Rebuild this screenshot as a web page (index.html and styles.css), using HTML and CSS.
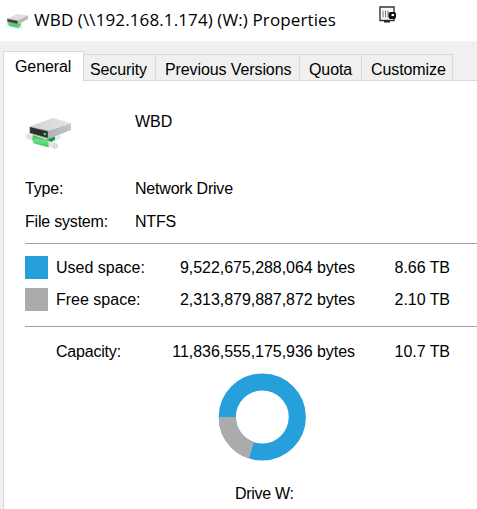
FILE: index.html
```
<!DOCTYPE html>
<html lang="en">
<head>
    <meta charset="UTF-8">
    <meta name="viewport" content="width=device-width, initial-scale=1.0">
    <title>WBD (\\192.168.1.174) (W:) Properties</title>
    <link rel="stylesheet" href="styles.css">
</head>
<body>
    <header class="titlebar">
        <svg class="title-icon" width="24" height="17" viewBox="0 0 24 17">
            <path d="M1 10l3-1 13 4v2l-3 1L2 12z" fill="#e0e3e2"/>
            <path d="M3 9.500l10 1.500 3-1v2l-3 3-9-2z" fill="#4fd06c"/>
            <path d="M2 5.500L12 1l11 1.500L13 7.500z" fill="#dcdddf"/>
            <path d="M13 7.500l10-5v3.500L13 11.500z" fill="#b5b7b9"/>
            <path d="M2 5.500l11 2v4L2 9z" fill="#77797b"/>
            <path d="M3 6.500l9 1.700v2L3 8.500z" fill="#3a3d3d"/>
        </svg>
        <h1 class="title">WBD (\\192.168.1.174) (W:) Properties</h1>
        <svg class="pin-icon" width="18" height="18" viewBox="0 0 18 18">
            <path d="M1 1h14v13.500H1z" fill="#fff" stroke="#333" stroke-width="1.400"/>
            <path d="M4 4.500v7M6.500 4.500v7M9 4.500v7" stroke="#777"/>
            <path d="M5 14.500h6v2H5z" fill="#222"/>
            <rect x="9.500" y="6" width="7.500" height="7" rx="2" fill="#111"/>
            <path d="M12.500 8h2.500v2h-2.500z" fill="#fff"/>
        </svg>
    </header>

    <nav class="tabs">
        <div class="tab active">General</div>
        <div class="tab security">Security</div>
        <div class="tab versions">Previous Versions</div>
        <div class="tab quota">Quota</div>
        <div class="tab customize">Customize</div>
    </nav>

    <main class="panel">
        <div class="info drive">
            <svg class="drive-icon" width="47" height="34" viewBox="0 0 47 34">
                <defs>
                    <linearGradient id="top" x1="0" y1="0" x2="1" y2="0">
                        <stop offset="0" stop-color="#d2d3d6"/>
                        <stop offset="1" stop-color="#e2e3e6"/>
                    </linearGradient>
                    <linearGradient id="side" x1="0" y1="0" x2="1" y2="0">
                        <stop offset="0" stop-color="#b2b3b7"/>
                        <stop offset="1" stop-color="#c4c5c9"/>
                    </linearGradient>
                    <linearGradient id="pipe" x1=".1" y1="0" x2="0" y2="1">
                        <stop offset="0" stop-color="#35b956"/>
                        <stop offset=".45" stop-color="#72dc83"/>
                        <stop offset="1" stop-color="#35bd55"/>
                    </linearGradient>
                </defs>
                <!-- network cable -->
                <path d="M28 20l7-3 1 3-7 4z" fill="#e4e6e7"/>
                <path d="M22 21l8-3v3.500L24 26z" fill="#149c4d"/>
                <path d="M2 15.500l6 2v5L2 21Q-.5 18 2 15.500z" fill="#dfe2e2"/>
                <path d="M8 17l16 5v7.500L9 25.500q-3-3-1-8.500z" fill="url(#pipe)"/>
                <path d="M23.500 23l8 2q2.500 3 0 6l-8-2z" fill="#e6e8e8"/>
                <ellipse cx="30.500" cy="28" rx="1.700" ry="2.600" fill="#e2e4e4" stroke="#c3c5c5" stroke-width=".7"/>
                <!-- disk box -->
                <path d="M4.500 8.500L28 0l18 5.300-22.500 7.400z" fill="url(#top)"/>
                <path d="M23.500 12.700L46 5.300V12l-22.500 9z" fill="url(#side)"/>
                <path d="M4.500 8.500l19 4.200V21l-19-5.500z" fill="#8b8c8f"/>
                <path d="M5.200 9.300l17.500 4.100v6.300L5.200 14.700z" fill="#2b2e2e"/>
                <circle cx="19.800" cy="16" r="1.300" fill="#40e650"/>
            </svg>
            <span class="value name">WBD</span>
        </div>
        <div class="info type">
            <span class="label">Type:</span>
            <span class="value">Network Drive</span>
        </div>
        <div class="info">
            <span class="label">File system:</span>
            <span class="value">NTFS</span>
        </div>

        <section class="usage">
            <div class="usage-row">
                <span class="swatch used"></span>
                <span>Used space:</span>
                <span class="number">9,522,675,288,064 bytes</span>
                <span class="number">8.66 TB</span>
            </div>
            <div class="usage-row">
                <span class="swatch free"></span>
                <span>Free space:</span>
                <span class="number">2,313,879,887,872 bytes</span>
                <span class="number">2.10 TB</span>
            </div>
        </section>

        <section class="capacity">
            <div class="usage-row">
                <span></span>
                <span class="label">Capacity:</span>
                <span class="number">11,836,555,175,936 bytes</span>
                <span class="number">10.7 TB</span>
            </div>
        </section>

        <figure class="chart">
            <svg width="88" height="88" viewBox="0 0 88 88">
                <circle cx="44.300" cy="44" r="35" fill="none" stroke="#26a0da" stroke-width="17.200"/>
                <path d="M9.300 44A35 35 0 0 0 33.500 77.290" fill="none" stroke="#ababab" stroke-width="17.200"/>
            </svg>
            <figcaption>Drive W:</figcaption>
        </figure>
    </main>
</body>
</html>
```

FILE: styles.css
```
* {
    box-sizing: border-box;
}
body {
    margin: 0;
    height: 509px;
    display: flex;
    flex-direction: column;
    overflow: hidden;
    background-color: #f0f0f0;
    color: #000;
    font-family: "Liberation Sans", Arial, sans-serif;
    font-size: 16px;
    line-height: 18px;
}
.titlebar {
    display: flex;
    align-items: flex-start;
    height: 41px;
    flex: none;
    padding-left: 5px;
    background-color: #fff;
}
.title-icon {
    margin-top: 13px;
}
.title {
    width: 303px;
    margin: 8px 0 0 5px;
    font-family: "Open Sans", "Noto Sans", sans-serif;
    font-size: 17px;
    font-weight: 400;
    line-height: 24px;
    letter-spacing: 0.11px;
    white-space: nowrap;
}
.pin-icon {
    margin: 6px 0 0 42px;
}
.tabs {
    display: flex;
    align-items: flex-end;
    height: 40px;
    flex: none;
    padding-left: 3px;
    letter-spacing: -0.1px;
    position: relative;
    z-index: 1;
}
.tab {
    height: 27px;
    padding: 6px 0 0 6px;
    border: 1px solid #d9d9d9;
    border-left: none;
    white-space: nowrap;
}
.tab.active {
    width: 81px;
    height: 30px;
    padding: 6px 0 0 11px;
    border-left: 1px solid #d9d9d9;
    border-bottom: none;
    background-color: #fff;
}
.security {
    width: 72px;
}
.versions {
    width: 144px;
    padding-left: 9px;
}
.quota {
    width: 62px;
    padding-left: 9px;
}
.customize {
    width: 91px;
    padding-left: 9px;
}
.panel {
    flex: 1;
    margin: -1px 0 0 3px;
    padding: 32px 0 0 21px;
    border: 1px solid #d9d9d9;
    border-right: none;
    border-bottom: none;
    background-color: #fff;
}
.info {
    display: grid;
    grid-template-columns: 110px 1fr;
    height: 33px;
}
.drive {
    height: 67px;
}
.drive-icon {
    margin-top: 5px;
}
.label, .value {
    letter-spacing: -0.2px;
}
.name {
    letter-spacing: 0;
}
.usage {
    height: 83px;
    margin-top: -3px;
    padding-top: 12px;
    border-top: 1px solid #a0a0a0;
}
.usage-row {
    display: grid;
    grid-template-columns: 31px 90px 209px 95px;
    align-items: center;
    height: 23px;
    margin-bottom: 9px;
}
.swatch {
    width: 23px;
    height: 23px;
}
.used {
    background-color: #26a0da;
}
.free {
    background-color: #ababab;
}
.number {
    letter-spacing: -0.05px;
    text-align: right;
}
.capacity {
    padding-top: 13px;
    border-top: 1px solid #a0a0a0;
}
.chart {
    width: 88px;
    margin: 10px 0 0 193px;
}
.chart svg {
    display: block;
}
.chart figcaption {
    margin-top: 24px;
    padding-left: 17px;
    letter-spacing: -0.3px;
}
```
